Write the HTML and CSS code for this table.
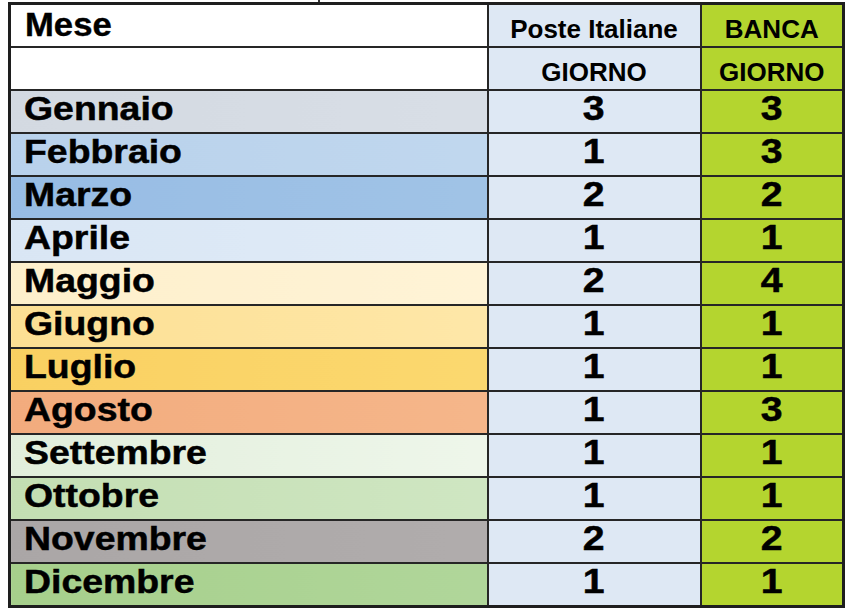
FILE: index.html
```html
<!DOCTYPE html>
<html lang="it">
<head>
<meta charset="utf-8">
<title>Mese - Poste Italiane - Banca</title>
<link rel="stylesheet" href="styles.css">
</head>
<body>
<div class="tick"></div>
<table class="cal">
  <colgroup>
    <col class="c-mese">
    <col class="c-poste">
    <col class="c-banca">
  </colgroup>
  <thead>
    <tr class="h1">
      <th class="mese-h"><span>Mese</span></th>
      <th class="poste head"><span>Poste Italiane</span></th>
      <th class="banca head"><span>BANCA</span></th>
    </tr>
    <tr class="h2">
      <th class="mese-h"></th>
      <th class="poste head"><span>GIORNO</span></th>
      <th class="banca head"><span>GIORNO</span></th>
    </tr>
  </thead>
  <tbody>
    <tr><td class="month gen"><span>Gennaio</span></td><td class="poste num"><span>3</span></td><td class="banca num"><span>3</span></td></tr>
    <tr><td class="month feb"><span>Febbraio</span></td><td class="poste num"><span>1</span></td><td class="banca num"><span>3</span></td></tr>
    <tr><td class="month mar"><span>Marzo</span></td><td class="poste num"><span>2</span></td><td class="banca num"><span>2</span></td></tr>
    <tr><td class="month apr"><span>Aprile</span></td><td class="poste num"><span>1</span></td><td class="banca num"><span>1</span></td></tr>
    <tr><td class="month mag"><span>Maggio</span></td><td class="poste num"><span>2</span></td><td class="banca num"><span>4</span></td></tr>
    <tr><td class="month giu"><span>Giugno</span></td><td class="poste num"><span>1</span></td><td class="banca num"><span>1</span></td></tr>
    <tr><td class="month lug"><span>Luglio</span></td><td class="poste num"><span>1</span></td><td class="banca num"><span>1</span></td></tr>
    <tr><td class="month ago"><span>Agosto</span></td><td class="poste num"><span>1</span></td><td class="banca num"><span>3</span></td></tr>
    <tr><td class="month set"><span>Settembre</span></td><td class="poste num"><span>1</span></td><td class="banca num"><span>1</span></td></tr>
    <tr><td class="month ott"><span>Ottobre</span></td><td class="poste num"><span>1</span></td><td class="banca num"><span>1</span></td></tr>
    <tr><td class="month nov"><span>Novembre</span></td><td class="poste num"><span>2</span></td><td class="banca num"><span>2</span></td></tr>
    <tr><td class="month dic"><span>Dicembre</span></td><td class="poste num"><span>1</span></td><td class="banca num"><span>1</span></td></tr>
  </tbody>
</table>
</body>
</html>
```

FILE: styles.css
```css
html, body {
  margin: 0;
  padding: 0;
  background: #ffffff;
}

body {
  font-family: "Liberation Sans", Arial, Helvetica, sans-serif;
  color: #000;
}

.tick {
  width: 2px;
  height: 2px;
  margin-left: 318px;
  background: #333;
}

.cal {
  margin-left: 8px;
  width: 834px;
  border-collapse: collapse;
  table-layout: fixed;
  border: 3px solid #1e1e1e;
}

.c-mese { width: 478px; }
.c-poste { width: 213px; }
.c-banca { width: 143px; }

.cal th,
.cal td {
  border: 2px solid #262626;
  padding: 0;
  height: 41px;
  line-height: 40px;
  vertical-align: middle;
  white-space: nowrap;
}

.cal span {
  display: inline-block;
  line-height: 40px;
}

.mese-h {
  background: #fff;
  text-align: left;
  font-weight: bold;
  font-size: 33px;
  padding-left: 14px !important;
}

.mese-h span {
  transform: translateY(-1px) scaleX(1.05);
  transform-origin: left center;
  -webkit-text-stroke: 0.4px #000;
}

.head {
  font-size: 26px;
  font-weight: bold;
  text-align: center;
}

.head span {
  transform: translateY(3px);
}

.poste { background: #dee8f4; }
.banca { background: #b4d52f; }

.month {
  font-size: 34px;
  font-weight: bold;
  text-align: left;
  padding-left: 13px !important;
}

.month span {
  transform: translateY(-4px) scaleX(1.1);
  transform-origin: left center;
  -webkit-text-stroke: 0.5px #000;
}

.num {
  font-size: 35px;
  font-weight: bold;
  text-align: center;
}

.num span {
  transform: translateY(-4px) scaleX(1.12);
  transform-origin: center center;
  -webkit-text-stroke: 0.5px #000;
}

.gen { background: linear-gradient(90deg, #d3d9e1, #d8dee6); }
.feb { background: linear-gradient(90deg, #b8d1eb, #c0d7ee); }
.mar { background: linear-gradient(90deg, #97bce4, #a0c3e6); }
.apr { background: linear-gradient(90deg, #d9e6f4, #e0ebf7); }
.mag { background: linear-gradient(90deg, #fdefcb, #fff3d6); }
.giu { background: linear-gradient(90deg, #fcdf93, #fee7a8); }
.lug { background: linear-gradient(90deg, #f9d061, #fbd86f); }
.ago { background: linear-gradient(90deg, #f2ab7d, #f5b68a); }
.set { background: linear-gradient(90deg, #e1eedb, #eef6ea); }
.ott { background: linear-gradient(90deg, #c3deb2, #cfe6c2); }
.nov { background: linear-gradient(90deg, #aaa6a6, #b0acac); }
.dic { background: linear-gradient(90deg, #a6cf8b, #b0d69a); }
```
